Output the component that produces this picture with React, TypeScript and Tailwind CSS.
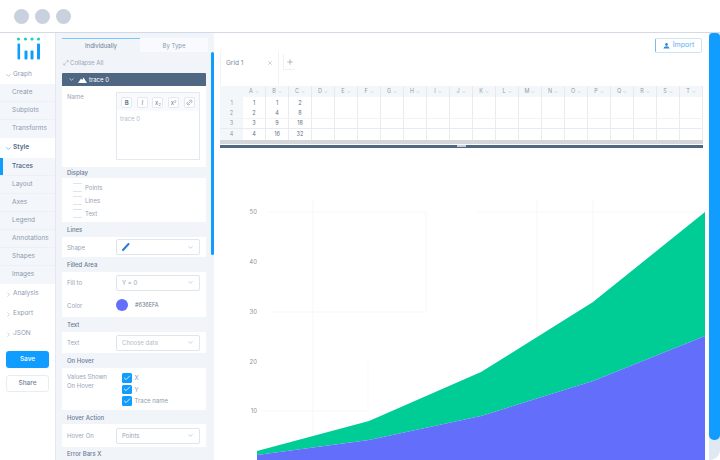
import { ChevronDown, ChevronRight, Check, Plus, X, Link2 } from "lucide-react";
import type { ReactNode } from "react";

const GROUP_ONE = ["Create", "Subplots", "Transforms"];
const GROUP_TWO = ["Traces", "Layout", "Axes", "Legend", "Annotations", "Shapes", "Images"];
const COLUMNS = "ABCDEFGHIJKLMNOPQRST".split("");
const ROWS = [
  ["1", "1", "2"],
  ["2", "4", "8"],
  ["3", "9", "18"],
  ["4", "16", "32"],
];
const ROW_HEIGHTS = ["h-[12px] border-b-0", "h-[10px] border-b-[#f1f3f6]", "h-[10px]", "h-[11px]"];

function Logo() {
  return (
    <svg width="56" height="30" viewBox="0 0 56 30" className="block">
      {[18.5, 25.5, 32, 38.5].map((x) => (
        <circle key={x} cx={x} cy="6" r="1.6" fill="#19d3c5" />
      ))}
      <rect x="17.5" y="10.5" width="2.6" height="16" rx="1" fill="#119dff" />
      <rect x="24.5" y="17.5" width="3" height="9" rx="1" fill="#119dff" />
      <rect x="30.5" y="17.5" width="3" height="9" rx="1" fill="#119dff" />
      <rect x="37" y="10.5" width="3" height="16" rx="1" fill="#119dff" />
    </svg>
  );
}

function SideHeader({ label, active }: { label: string; active?: boolean }) {
  return (
    <div className={`flex items-center bg-white pl-[5px] ${active ? "h-[20px] font-semibold text-[#506784]" : "h-[18px] text-[#8c9bb0]"}`}>
      <ChevronDown size={7} strokeWidth={2} className={active ? "text-[#119dff]" : "text-[#8c9bb0]"} />
      <span className="ml-[1px]">{label}</span>
    </div>
  );
}

function SideCollapsed({ label }: { label: string }) {
  return (
    <div className="flex h-[20px] items-center pl-[5px] text-[#8c9bb0]">
      <ChevronRight size={7} strokeWidth={1.5} />
      <span className="ml-[1px]">{label}</span>
    </div>
  );
}

function SideItem({ label, active }: { label: string; active?: boolean }) {
  return (
    <div className="flex h-[18px] items-center border-b border-[#edf1f6] last:border-b-0">
      <div className={`h-full w-[3px] ${active ? "bg-[#119dff]" : "bg-transparent"}`} />
      <span className={`ml-[9px] ${active ? "font-medium text-[#506784]" : "text-[#8c9bb0]"}`}>{label}</span>
    </div>
  );
}

function Sidebar() {
  return (
    <div className="flex h-full w-[56px] shrink-0 flex-col border-r border-[#e4e9f0] bg-white text-[6.5px]">
      <Logo />
      <div className="h-[3px]" />
      <SideHeader label="Graph" />
      <div className="bg-[#f3f6fa]">
        {GROUP_ONE.map((item) => (
          <SideItem key={item} label={item} />
        ))}
      </div>
      <SideHeader label="Style" active />
      <div className="bg-[#f3f6fa]">
        {GROUP_TWO.map((item) => (
          <SideItem key={item} label={item} active={item === "Traces"} />
        ))}
      </div>
      <SideCollapsed label="Analysis" />
      <SideCollapsed label="Export" />
      <SideCollapsed label="JSON" />
      <div className="mx-[6px] mt-[7px] flex h-[17px] items-center justify-center rounded-[3px] bg-[#119dff] font-medium text-white">
        Save
      </div>
      <div className="mx-[6px] mt-[7px] flex h-[17px] items-center justify-center rounded-[3px] border border-[#e8edf3] bg-white font-medium text-[#6f7f95]">
        Share
      </div>
    </div>
  );
}

function SectionTitle({ label, height }: { label: string; height: string }) {
  return (
    <div className={`flex items-center pl-[5px] font-medium text-[#6b7b91] ${height}`}>{label}</div>
  );
}

function Row({ label, height, children }: { label: ReactNode; height: string; children: ReactNode }) {
  return (
    <div className={`flex items-center bg-white ${height}`}>
      <div className="w-[54px] shrink-0 pl-[5px] text-[#98a5b7]">{label}</div>
      {children}
    </div>
  );
}

function SelectBox({ text, tone = "text-[#98a5b7]", children }: { text?: string; tone?: string; children?: ReactNode }) {
  return (
    <div className="flex h-[16px] w-[84px] items-center rounded-[2px] border border-[#dfe5ed] bg-white pl-[5px] pr-[5px]">
      {children}
      <span className={tone}>{text}</span>
      <ChevronDown size={7} className="ml-auto text-[#a3afbe]" />
    </div>
  );
}

function BlueCheck({ label }: { label: string }) {
  return (
    <div className="flex h-[11.5px] items-center">
      <div className="flex size-[9.5px] items-center justify-center rounded-[1.5px] bg-[#119dff]">
        <Check size={8} strokeWidth={2.5} className="text-white" />
      </div>
      <span className="ml-[3px] text-[#8c9bb0]">{label}</span>
    </div>
  );
}

function EmptyCheck({ label }: { label: string }) {
  return (
    <div className="flex h-[13px] items-center pl-[11px]">
      <div className="h-[9px] w-[9px] border-x-0 border-y border-[#dfe5ed]" />
      <span className="ml-[3px] text-[#98a5b7]">{label}</span>
    </div>
  );
}

function ToolButton({ children }: { children: ReactNode }) {
  return (
    <div className="flex size-[11px] items-center justify-center rounded-[2px] border border-[#e4e9f0] bg-white text-[#6b7b91]">
      {children}
    </div>
  );
}

function Panel() {
  return (
    <div className="flex h-full w-[158px] shrink-0 bg-[#f1f5fa] pl-[6px] text-[6px]">
      <div className="w-[144px] shrink-0 pt-[5px]">
        <div className="flex h-[14px] w-[146px]">
          <div className="flex w-[78px] items-center justify-center border-t border-[#7cc4fa] bg-[#f1f5fa] text-[#6b7b91]">
            Individually
          </div>
          <div className="flex flex-1 items-center justify-center bg-[#f8fafd] text-[#8c9bb0]">By Type</div>
        </div>
        <div className="flex h-[21px] items-center pl-[1px] text-[#98a5b7]">
          <span className="text-[7px] leading-none">⤢</span>
          <span className="ml-[1px]">Collapse All</span>
        </div>
        <div className="flex h-[13px] items-center rounded-t-[1px] bg-[#506784] pl-[6px] text-white">
          <ChevronDown size={7} strokeWidth={2} />
          <svg width="9" height="6" viewBox="0 0 9 6" className="ml-[3px]">
            <path d="M0 6 L3 1.5 L4.2 3 L5.5 0.5 L9 6 Z" fill="#fff" />
          </svg>
          <span className="ml-[2px]">trace 0</span>
        </div>

        <div className="flex h-[81px] bg-white pt-[6px]">
          <div className="w-[54px] shrink-0 pl-[5px] text-[#98a5b7]">Name</div>
          <div className="h-[68px] w-[84px] border border-[#e4e9f0]">
            <div className="flex h-[18px] items-center justify-around bg-[#f8fafd] px-[2px]">
              <ToolButton><span className="font-bold">B</span></ToolButton>
              <ToolButton><span className="italic">I</span></ToolButton>
              <ToolButton><span>x<sub className="text-[4px]">2</sub></span></ToolButton>
              <ToolButton><span>x<sup className="text-[4px]">2</sup></span></ToolButton>
              <ToolButton><Link2 size={7} className="-rotate-45" /></ToolButton>
            </div>
            <div className="pl-[3px] pt-[3px] text-[#b3bdca]">trace 0</div>
          </div>
        </div>

        <SectionTitle label="Display" height="h-[11px]" />
        <div className="flex h-[44px] flex-col justify-center bg-white">
          <EmptyCheck label="Points" />
          <EmptyCheck label="Lines" />
          <EmptyCheck label="Text" />
        </div>

        <SectionTitle label="Lines" height="h-[15px]" />
        <Row label="Shape" height="h-[20px]">
          <SelectBox>
            <svg width="8" height="8" viewBox="0 0 8 8">
              <path d="M1 7 L6.5 1" stroke="#2a7fd0" strokeWidth="2" strokeLinecap="round" />
            </svg>
          </SelectBox>
        </Row>

        <SectionTitle label="Filled Area" height="h-[15px]" />
        <Row label="Fill to" height="h-[21px]">
          <SelectBox text="Y = 0" />
        </Row>
        <Row label="Color" height="h-[24px]">
          <div className="size-[12px] rounded-full bg-[#636efa]" />
          <span className="ml-[7px] text-[5.5px] text-[#6b7b91]">#636EFA</span>
        </Row>

        <SectionTitle label="Text" height="h-[15px]" />
        <Row label="Text" height="h-[21px]">
          <SelectBox text="Choose data" tone="text-[#b3bdca]" />
        </Row>

        <SectionTitle label="On Hover" height="h-[15px]" />
        <div className="flex h-[42px] bg-white pt-[4px]">
          <div className="w-[60px] shrink-0 pl-[5px] leading-[9px] text-[#98a5b7]">
            Values Shown
            <br />
            On Hover
          </div>
          <div>
            <BlueCheck label="X" />
            <BlueCheck label="Y" />
            <BlueCheck label="Trace name" />
          </div>
        </div>

        <SectionTitle label="Hover Action" height="h-[14px]" />
        <Row label="Hover On" height="h-[23px]">
          <SelectBox text="Points" />
        </Row>

        <SectionTitle label="Error Bars X" height="h-[13px]" />
      </div>
      <div className="ml-[5px] mt-[19px] h-[203px] w-[3px] rounded-full bg-[#119dff]" />
    </div>
  );
}

function DataGrid() {
  return (
    <div className="mx-[6px] text-[5.5px] text-[#5f6f85]">
      <div className="flex h-[11px] bg-[#f4f7fa]">
        <div className="w-[23px] shrink-0" />
        {COLUMNS.map((col) => (
          <div key={col} className="flex w-[23px] shrink-0 items-center justify-center border-r border-[#e6e9ee] text-[#8c9bb0]">
            {col}
            <ChevronDown size={4} className="ml-[2px]" />
          </div>
        ))}
      </div>
      {ROWS.map((row, r) => (
        <div key={r} className={`flex border-b border-[#e8ebef] last:border-b-0 ${ROW_HEIGHTS[r]}`}>
          <div className="flex w-[23px] shrink-0 items-center justify-center bg-[#f4f7fa] text-[#8c9bb0]">{r + 1}</div>
          {COLUMNS.map((col, c) => (
            <div key={col} className="flex w-[23px] shrink-0 items-center justify-center border-r border-[#e9ebef]">
              {row[c] ?? ""}
            </div>
          ))}
        </div>
      ))}
    </div>
  );
}

function Chart() {
  return (
    <svg width="495" height="312" viewBox="214 148 495 312" className="block">
      <g stroke="#f7f7f9" strokeWidth="1">
        <path d="M268 212H426M478 212H705M272 312H426M260 411H368" />
        <path d="M313 200V460M426 212V312M537 200V340M593 200V300M368 365V411" />
      </g>
      <g fontSize="6" fill="#8a94a3" fontFamily="Inter, sans-serif" textAnchor="end">
        <text x="257" y="214">50</text>
        <text x="257" y="264">40</text>
        <text x="257" y="314">30</text>
        <text x="257" y="364">20</text>
        <text x="257" y="413">10</text>
      </g>
      <path d="M257 451 L369 421 L481 372 L593 302 L705 212 V336 L593 381 L481 416 L369 440 L257 455 Z" fill="#00cc96" />
      <path d="M257 455 L369 440 L481 416 L593 381 L705 336 V460 H257 Z" fill="#636efa" />
    </svg>
  );
}

function Main() {
  return (
    <div className="flex h-full min-w-0 flex-1 flex-col bg-white">
      <div className="flex h-[53px] items-start">
        <div className="ml-[6px] mt-[18px] flex h-[34px] w-[59px] items-start border-l border-r border-[#f1f3f6] pl-[5px] pt-[8px] text-[6.5px] text-[#7d8aa0]">
          <span>Grid 1</span>
          <X size={6} className="ml-auto mr-[5px] mt-[1px] text-[#9aa6b6]" />
        </div>
        <div className="ml-[4px] mt-[21px] flex h-[16px] w-[12px] items-center justify-center border-b border-l border-[#eef1f5] text-[#8c9bb0]">
          <Plus size={8} />
        </div>
        <div className="ml-auto mr-[7px] mt-[5px] flex h-[15px] w-[47px] items-center justify-center gap-[3px] rounded-[2px] border border-[#cfe3f5] border-l-[#7fb8e8] text-[7px] text-[#5aaef0]">
          <svg width="7" height="6" viewBox="0 0 7 6">
            <circle cx="3.5" cy="1.5" r="1.4" fill="#2a8fe0" />
            <path d="M1 4 Q3.5 2.4 6 4 V5 H1 Z M0.5 5.4 H6.5 V6 H0.5 Z" fill="#2a8fe0" />
          </svg>
          Import
        </div>
      </div>
      <DataGrid />
      <div className="mx-[6px] h-[4px] bg-[#d4d6d9]" />
      <div className="h-[1px]" />
      <div className="mx-[6px] flex h-[3px] justify-center bg-[#506784]">
        <div className="h-[1.5px] w-[9px] bg-[#c6d0dc]" />
      </div>
      <Chart />
    </div>
  );
}

export default function App() {
  return (
    <div
      className="flex h-[460px] w-[720px] flex-col overflow-hidden rounded-[10px] bg-white"
      style={{ fontFamily: "Inter, 'Liberation Sans', sans-serif" }}
    >
      <div className="flex h-[33px] shrink-0 items-center gap-[6px] border-b border-[#d3d9e6] pl-[14px]">
        <div className="size-[15px] rounded-full bg-[#c9d0de]" />
        <div className="size-[15px] rounded-full bg-[#c9d0de]" />
        <div className="size-[15px] rounded-full bg-[#c9d0de]" />
      </div>
      <div className="flex min-h-0 flex-1">
        <Sidebar />
        <Panel />
        <Main />
        <div className="flex h-full w-[11px] shrink-0 flex-col bg-[#dfe8f3]">
          <div className="h-[407px] rounded-b-[5px] rounded-t-[4px] bg-[#119dff]" />
        </div>
      </div>
    </div>
  );
}
